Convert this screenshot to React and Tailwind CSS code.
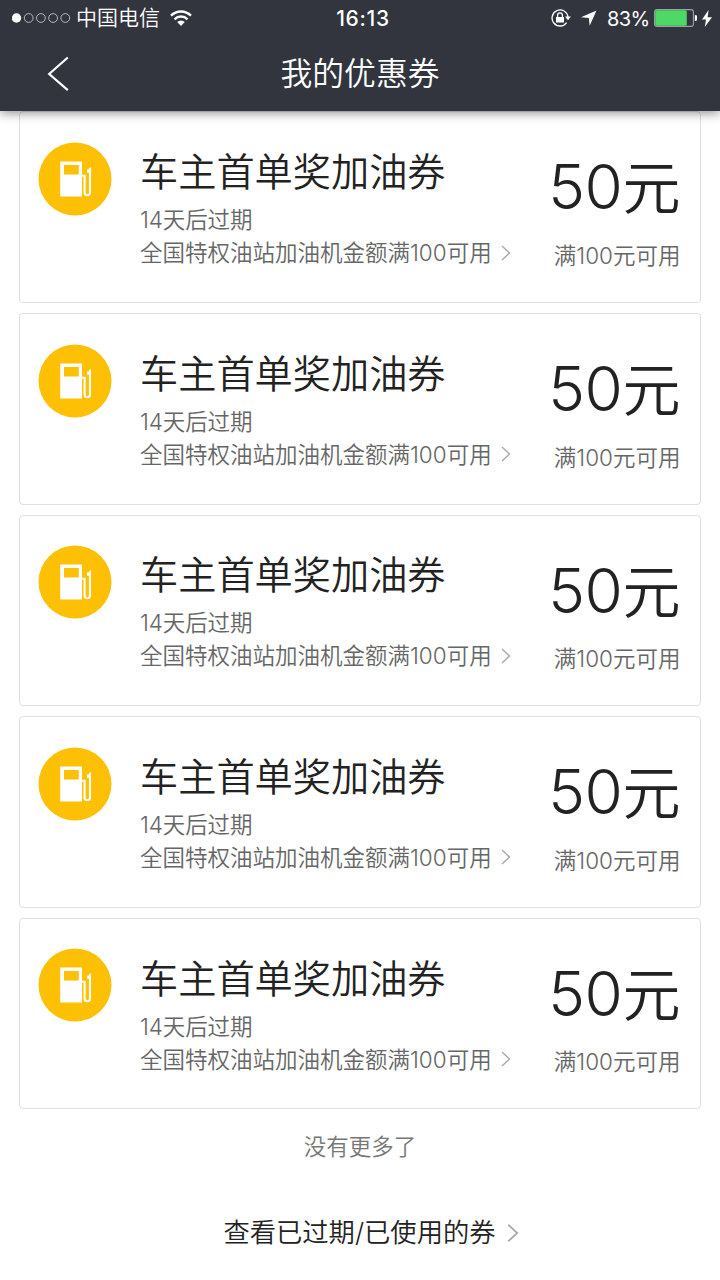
import React from 'react';

const coupons = [
    { id: 1, title: '车主首单奖加油券', expire: '14天后过期', rule: '全国特权油站加油机金额满100可用', amount: '50', limit: '满100元可用' },
    { id: 2, title: '车主首单奖加油券', expire: '14天后过期', rule: '全国特权油站加油机金额满100可用', amount: '50', limit: '满100元可用' },
    { id: 3, title: '车主首单奖加油券', expire: '14天后过期', rule: '全国特权油站加油机金额满100可用', amount: '50', limit: '满100元可用' },
    { id: 4, title: '车主首单奖加油券', expire: '14天后过期', rule: '全国特权油站加油机金额满100可用', amount: '50', limit: '满100元可用' },
    { id: 5, title: '车主首单奖加油券', expire: '14天后过期', rule: '全国特权油站加油机金额满100可用', amount: '50', limit: '满100元可用' },
];

const ArrowRight = ({ className }) => (
    <svg className={className} viewBox="0 0 10 16" fill="none" stroke="currentColor" strokeWidth="1.5">
        <path d="M1 1l7.5 7L1 15" />
    </svg>
);

const FuelIcon = () => (
    <svg className="w-[74px] h-[74px] shrink-0" viewBox="0 0 74 74">
        <circle cx="37" cy="37" r="36.5" fill="#fdc005" />
        <path d="M22.2 19.5H44v35H22.2z M26 23v9.5h14.8V23z" fill="#fff" fillRule="evenodd" />
        <path d="M44 33.8h2.6V50.6a2.7 2.7 0 0 0 5.4 0V26" fill="none" stroke="#fff" strokeWidth="2.1" />
        <path d="M53 24.8v6h-4v-3.4h1.6z" fill="#fff" />
    </svg>
);

const StatusBar = () => (
    <div className="flex h-9 items-center text-[20px] leading-9">
        <div className="flex w-[240px] items-center pl-3">
            <svg className="h-[10px] w-[59px]" viewBox="0 0 59 10">
                <circle cx="4.5" cy="5" r="4.7" fill="#fff" />
                <g fill="none" stroke="#c4c5c9" strokeWidth="0.9">
                    <circle cx="16.7" cy="5" r="4.4" />
                    <circle cx="28.9" cy="5" r="4.4" />
                    <circle cx="41.1" cy="5" r="4.4" />
                    <circle cx="53.3" cy="5" r="4.4" />
                </g>
            </svg>
            <span className="ml-[5px] text-[21px] font-[350]">中国电信</span>
            <svg className="ml-[10px] h-[17px] w-[22px]" viewBox="0 0 22 17">
                <g fill="none" stroke="#fff" strokeWidth="2.4">
                    <path d="M1 5.7a14 14 0 0 1 20 0" />
                    <path d="M4.5 9.3a9.1 9.1 0 0 1 13 0" />
                </g>
                <path d="M7.2 12a5.4 5.4 0 0 1 7.6 0L11 15.9z" fill="#fff" />
            </svg>
        </div>
        <div className="w-[246px] pt-px text-center text-[21px] font-medium tracking-[0.7px]">16:13</div>
        <div className="flex flex-1 items-center justify-end pr-[8px]">
            <svg className="h-[18px] w-5" viewBox="0 0 20 18">
                <path d="M15.6 13.6A8 8 0 1 1 17 8" fill="none" stroke="#fff" strokeWidth="1.3" />
                <path d="M14 7.6h6l-3 3.6z" fill="#fff" />
                <path d="M5 8h8v5.5H5z" fill="#fff" />
                <path d="M6.6 8V6.2a2.4 2.4 0 0 1 4.8 0V8" fill="none" stroke="#fff" strokeWidth="1.3" />
            </svg>
            <svg className="ml-[10px] h-4 w-4" viewBox="0 0 16 16">
                <path d="M15.5 0.5L0 7.3l7.8.6.9 7.8z" fill="#fff" />
            </svg>
            <span className="ml-[10px] w-[43px] whitespace-nowrap pt-px text-[20px] tracking-[-0.6px]">83%</span>
            <svg className="ml-[4px] h-[18px] w-[43px]" viewBox="0 0 43 18">
                <rect x="0.6" y="0.6" width="38.8" height="16.8" rx="2.5" fill="none" stroke="#9fa1a6" strokeWidth="1.1" />
                <rect x="1.2" y="1.2" width="31.6" height="15.6" rx="1.6" fill="#4cd964" />
                <path d="M40.8 6a3 3 0 0 1 0 6z" fill="#fff" />
            </svg>
            <svg className="ml-[5px] h-[17px] w-[10px]" viewBox="0 0 10 17">
                <path d="M6.6 0L0 9.4h4L2.8 17 10 7.2H5.6z" fill="#fff" />
            </svg>
        </div>
    </div>
);

const CouponCard = ({ coupon }) => (
    <div className="flex h-[191.6px] w-[682px] rounded-[4px] border border-[#dfdfdf] bg-white pl-[18px] pr-[19.5px]">
        <div className="pt-[29.7px]">
            <FuelIcon />
        </div>
        <div className="ml-[28px] flex-1 whitespace-nowrap pt-[35.8px]">
            <h2 className="text-[38.2px] font-[350] leading-[48px] text-[#222]">{coupon.title}</h2>
            <p className="mt-[7px] text-[22.5px] font-[350] leading-[33px] tracking-[-0.1px] text-[#666]">{coupon.expire}</p>
            <div className="flex items-center text-[22.5px] font-[350] leading-[33px] text-[#666]">
                <span>{coupon.rule}</span>
                <ArrowRight className="ml-[9px] h-4 w-[10px] text-[#aaa]" />
            </div>
        </div>
        <div className="whitespace-nowrap pt-[40px] text-right">
            <p className="text-[58px] font-[350] leading-[70px] text-[#222]">
                <span className="text-[62px] font-light tracking-[-0.4px]">{coupon.amount}</span>元
            </p>
            <p className="mt-[15.6px] text-[22.5px] font-[350] leading-[33px] text-[#666]">{coupon.limit}</p>
        </div>
    </div>
);

const App = () => {
    return (
        <div className="flex h-[1280px] w-[720px] flex-col overflow-hidden bg-white font-['Inter','Noto_Sans_CJK_SC',sans-serif]">
            <header className="relative z-10 h-[111px] bg-[#32343e] text-white shadow-[0_2px_10px_rgba(0,0,0,0.45)]">
                <StatusBar />
                <div className="flex h-[75px] items-center">
                    <div className="w-[120px] pl-[47px]">
                        <svg className="h-9 w-6" viewBox="0 0 24 36" fill="none" stroke="#fff" strokeWidth="2.2">
                            <path d="M20.8 1.5L2.2 18l18.6 16.2" />
                        </svg>
                    </div>
                    <h1 className="w-[480px] text-center text-[31.8px] font-[350] leading-[40px]">我的优惠券</h1>
                </div>
            </header>

            {/* Coupon list */}
            <main className="flex flex-col items-center gap-[10px] pt-[0.4px]">
                {coupons.map((coupon) => (
                    <CouponCard key={coupon.id} coupon={coupon} />
                ))}
            </main>

            {/* Footer */}
            <p className="mt-[20.6px] text-center text-[22.5px] font-[350] leading-[33px] text-[#777]">没有更多了</p>
            <div className="mt-[50px] flex items-center justify-center pl-[22px] text-[26.3px] font-[350] leading-[40px] text-[#222]">
                <span>查看已过期/已使用的券</span>
                <ArrowRight className="ml-[11px] h-5 w-[12px] text-[#aaa]" />
            </div>
        </div>
    );
};

export default App;
